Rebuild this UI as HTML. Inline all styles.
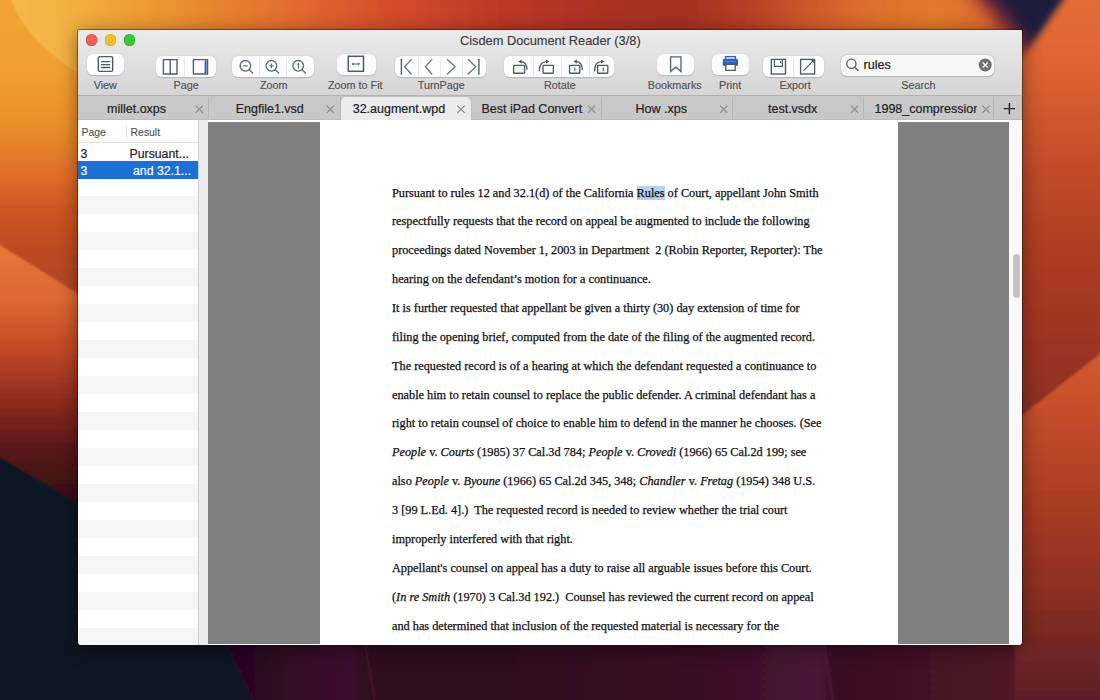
<!DOCTYPE html><html><head><meta charset="utf-8"><style>
*{margin:0;padding:0;box-sizing:border-box}
html,body{width:1100px;height:700px;overflow:hidden;background:#0b1522;font-family:"Liberation Sans",sans-serif}
.a{position:absolute}
#bg{position:absolute;left:0;top:0}
#win{position:absolute;left:78px;top:30px;width:944px;height:615px;border-radius:2px 2px 4px 4px;overflow:hidden;background:#fff;box-shadow:0 0 0 1px rgba(40,10,10,0.45),0 3px 20px rgba(0,0,0,0.45)}
#wc{position:absolute;left:-78px;top:-30px;width:1100px;height:700px}
.btn{position:absolute;background:#fcfcfc;border-radius:6px;box-shadow:0 0.5px 1.2px rgba(0,0,0,0.18)}
.lbl{position:absolute;font-size:10.8px;color:#505050;-webkit-text-stroke:0.15px #505050;white-space:nowrap;line-height:12px}
.tabt{position:absolute;font-size:12.5px;color:#222;-webkit-text-stroke:0.2px #222;white-space:nowrap;line-height:14px}
.ln{position:absolute;left:392px;font-family:"Liberation Serif",serif;font-size:12.27px;color:#111;-webkit-text-stroke:0.25px #111;white-space:nowrap;line-height:16px}
svg{position:absolute;overflow:visible}
</style></head><body><svg id="bg" width="1100" height="700" viewBox="0 0 1100 700"><defs><filter id="bl" x="-5%" y="-5%" width="110%" height="110%"><feGaussianBlur stdDeviation="1.2"/></filter><filter id="bl3" x="-20%" y="-20%" width="140%" height="140%"><feGaussianBlur stdDeviation="3"/></filter><linearGradient id="gTop" gradientUnits="userSpaceOnUse" x1="0" y1="0" x2="1100" y2="0"><stop offset="0" stop-color="#f2a935"/><stop offset="0.02" stop-color="#f4b446"/><stop offset="0.08" stop-color="#f1ab3d"/><stop offset="0.15" stop-color="#eb9432"/><stop offset="0.22" stop-color="#e57c2c"/><stop offset="0.28" stop-color="#e16630"/><stop offset="0.36" stop-color="#d44b2b"/><stop offset="0.45" stop-color="#bd3a28"/><stop offset="0.55" stop-color="#aa3024"/><stop offset="0.62" stop-color="#a43022"/><stop offset="0.68" stop-color="#b63f26"/><stop offset="0.73" stop-color="#cb582c"/><stop offset="0.78" stop-color="#db6b2e"/><stop offset="0.85" stop-color="#e07a2a"/><stop offset="0.9" stop-color="#dc6c30"/><stop offset="1" stop-color="#e06535"/></linearGradient><linearGradient id="gLeft" gradientUnits="userSpaceOnUse" x1="0" y1="0" x2="0" y2="700"><stop offset="0" stop-color="#f0a332"/><stop offset="0.1" stop-color="#f0a030"/><stop offset="0.18" stop-color="#ea8e2c"/><stop offset="0.25" stop-color="#df6e28"/><stop offset="0.3" stop-color="#cc5724"/><stop offset="0.36" stop-color="#bc4a22"/><stop offset="0.42" stop-color="#b04420"/><stop offset="1" stop-color="#a03a20"/></linearGradient><linearGradient id="gLeft2" gradientUnits="userSpaceOnUse" x1="0" y1="245" x2="0" y2="520"><stop offset="0" stop-color="#e57639"/><stop offset="0.2" stop-color="#dc6834"/><stop offset="0.38" stop-color="#c24a26"/><stop offset="0.55" stop-color="#932e20"/><stop offset="0.75" stop-color="#57161a"/><stop offset="1" stop-color="#2a0d18"/></linearGradient><linearGradient id="gYel" gradientUnits="userSpaceOnUse" x1="12" y1="0" x2="90" y2="0"><stop offset="0" stop-color="#f5b84a"/><stop offset="0.6" stop-color="#f3b244"/><stop offset="1" stop-color="#f1ab3d"/></linearGradient><linearGradient id="gRight" gradientUnits="userSpaceOnUse" x1="0" y1="0" x2="0" y2="420"><stop offset="0" stop-color="#e26c36"/><stop offset="0.15" stop-color="#df6432"/><stop offset="0.4" stop-color="#c24c28"/><stop offset="0.55" stop-color="#b24024"/><stop offset="0.7" stop-color="#a63822"/><stop offset="0.85" stop-color="#9a3220"/><stop offset="1" stop-color="#8e2e20"/></linearGradient><linearGradient id="gRight2" gradientUnits="userSpaceOnUse" x1="0" y1="350" x2="0" y2="700"><stop offset="0" stop-color="#d45c30"/><stop offset="0.2" stop-color="#c24c2a"/><stop offset="0.5" stop-color="#a33822"/><stop offset="0.72" stop-color="#872e22"/><stop offset="0.9" stop-color="#6a2426"/><stop offset="1" stop-color="#5c1e2a"/></linearGradient><linearGradient id="gBot" gradientUnits="userSpaceOnUse" x1="220" y1="0" x2="1100" y2="0"><stop offset="0" stop-color="#2a0620"/><stop offset="0.05" stop-color="#2c0722"/><stop offset="0.15" stop-color="#3e102e"/><stop offset="0.17" stop-color="#2e0a1a"/><stop offset="0.3" stop-color="#2e0a1c"/><stop offset="0.55" stop-color="#3a0d26"/><stop offset="0.68" stop-color="#4a1636"/><stop offset="0.7" stop-color="#3a0c24"/><stop offset="0.85" stop-color="#4a1428"/><stop offset="0.95" stop-color="#5a1c28"/><stop offset="1" stop-color="#622024"/></linearGradient><linearGradient id="gWedge" gradientUnits="userSpaceOnUse" x1="966.6" y1="12.8" x2="998.94" y2="-14.08"><stop offset="0" stop-color="#d06430" stop-opacity="0"/><stop offset="0.3" stop-color="#b04a32" stop-opacity="0.6"/><stop offset="0.55" stop-color="#7a2e38"/><stop offset="0.8" stop-color="#33203e"/><stop offset="1" stop-color="#1d1c3a"/></linearGradient></defs><g filter="url(#bl)"><rect x="-10" y="-10" width="1120" height="720" fill="#0b1522"/><rect x="-10" y="-10" width="1120" height="45" fill="url(#gTop)"/><rect x="-10" y="-10" width="95" height="720" fill="url(#gLeft)"/><path d="M12,-10 L12,0 C22,28 46,52 90,80 L90,-10 Z" fill="url(#gYel)"/><path d="M11,-10 L12,0 C22,28 46,52 90,80" stroke="#f7c158" stroke-width="1.3" fill="none" opacity="0.7"/><path d="M-10,239 L85,298 L85,720 L-10,720 Z" fill="url(#gLeft2)"/><path d="M-10,452 C20,468 60,492 90,512 L225,645 L256,710 L-10,710 Z" fill="#0b1522"/><path d="M225,640 L1110,640 L1110,710 L256,710 Z" fill="url(#gBot)"/><path d="M364.5,640 L376.5,710" stroke="#4e1a38" stroke-width="1.5" fill="none"/><path d="M823.5,640 L834.5,710" stroke="#561c3e" stroke-width="1.5" fill="none"/><rect x="1015" y="-10" width="95" height="720" fill="url(#gRight)"/><path d="M1015,421 L1110,346 L1110,710 L1015,710 Z" fill="url(#gRight2)"/></g><path d="M935,-15 L1073,-15 L1020,62 L1000,55 Z" fill="url(#gWedge)" filter="url(#bl3)"/></svg><div id="win"><div id="wc"><div class="a" style="left:78px;top:30px;width:944px;height:66px;background:linear-gradient(#ebebeb,#d5d5d5)"></div><div class="a" style="left:78px;top:95px;width:944px;height:1px;background:#b3b3b3"></div><div class="a" style="left:85.9px;top:34.4px;width:11.2px;height:11.2px;border-radius:50%;background:#f25f58;box-shadow:inset 0 0 0 0.5px #dc4a43"></div><div class="a" style="left:104.9px;top:34.4px;width:11.2px;height:11.2px;border-radius:50%;background:#f8bc2f;box-shadow:inset 0 0 0 0.5px #dfa127"></div><div class="a" style="left:123.9px;top:34.4px;width:11.2px;height:11.2px;border-radius:50%;background:#3bc43e;box-shadow:inset 0 0 0 0.5px #2ea832"></div><div class="a" style="left:460px;top:34px;font-size:12.8px;color:#3a3a3a;line-height:14px;white-space:nowrap;-webkit-text-stroke:0.15px #3a3a3a">Cisdem Document Reader (3/8)</div><div class="btn" style="left:87px;top:54px;width:37px;height:20.5px"></div><div class="btn" style="left:336.5px;top:54px;width:39.0px;height:20.5px"></div><div class="btn" style="left:656.5px;top:54px;width:37.5px;height:20.5px"></div><div class="btn" style="left:712px;top:54px;width:36.5px;height:20.5px"></div><div class="btn" style="left:156px;top:56.3px;width:59.5px;height:20.7px"></div><div class="a" style="left:184px;top:56.5px;width:1px;height:20.5px;background:#e8e8e8"></div><div class="btn" style="left:232px;top:56.3px;width:82px;height:20.7px"></div><div class="a" style="left:258.8px;top:56.5px;width:1px;height:20.5px;background:#e8e8e8"></div><div class="a" style="left:285.5px;top:56.5px;width:1px;height:20.5px;background:#e8e8e8"></div><div class="btn" style="left:395.2px;top:56.3px;width:91.0px;height:20.7px"></div><div class="a" style="left:417.8px;top:56.5px;width:1px;height:20.5px;background:#e8e8e8"></div><div class="a" style="left:439.7px;top:56.5px;width:1px;height:20.5px;background:#e8e8e8"></div><div class="a" style="left:462.2px;top:56.5px;width:1px;height:20.5px;background:#e8e8e8"></div><div class="btn" style="left:504px;top:56.3px;width:110px;height:20.7px"></div><div class="a" style="left:532.5px;top:56.5px;width:1px;height:20.5px;background:#e8e8e8"></div><div class="a" style="left:561px;top:56.5px;width:1px;height:20.5px;background:#e8e8e8"></div><div class="a" style="left:589px;top:56.5px;width:1px;height:20.5px;background:#e8e8e8"></div><div class="btn" style="left:762.8px;top:56.3px;width:61.0px;height:20.7px"></div><div class="a" style="left:792.5px;top:56.5px;width:1px;height:20.5px;background:#e8e8e8"></div><div class="a" style="left:840.6px;top:55px;width:153px;height:20.5px;border-radius:6px;background:#f7f7f7;box-shadow:0 0 0 0.5px rgba(0,0,0,0.12),0 0.5px 1px rgba(0,0,0,0.15)"></div><div class="lbl" style="left:93.7px;top:79px;">View</div><div class="lbl" style="left:173.5px;top:79px;">Page</div><div class="lbl" style="left:260px;top:79px;">Zoom</div><div class="lbl" style="left:328px;top:79px;">Zoom to Fit</div><div class="lbl" style="left:417.7px;top:79px;">TurnPage</div><div class="lbl" style="left:544px;top:79px;">Rotate</div><div class="lbl" style="left:647.7px;top:79px;">Bookmarks</div><div class="lbl" style="left:719px;top:79px;">Print</div><div class="lbl" style="left:779.5px;top:79px;">Export</div><div class="lbl" style="left:901.2px;top:79px;">Search</div><div class="a" style="left:863.5px;top:58px;font-size:12.6px;color:#222;line-height:14px;-webkit-text-stroke:0.2px #222">rules</div><svg class="a" style="left:0px;top:0px" width="1100" height="100" viewBox="0 0 1100 100" >
      <rect x="98.3" y="56.6" width="14.4" height="14.8" rx="1.6" stroke="#4d5a69" stroke-width="1.35" fill="none" stroke-linecap="round" stroke-linejoin="round"/>
      <path d="M101.5 61.6H109.6M101.5 64.6H109.6M101.5 67.5H109.6" stroke="#4d5a69" stroke-width="1.35" fill="none" stroke-linecap="round" stroke-linejoin="round"/>
      <rect x="163.4" y="59.6" width="13.6" height="14.4" stroke="#4d5a69" stroke-width="1.35" fill="none" stroke-linecap="round" stroke-linejoin="round"/>
      <path d="M170.2 59.6V74" stroke="#4d5a69" stroke-width="1.35" fill="none" stroke-linecap="round" stroke-linejoin="round"/>
      <rect x="193.4" y="59.6" width="14.2" height="14.4" stroke="#4d5a69" stroke-width="1.35" fill="none" stroke-linecap="round" stroke-linejoin="round"/>
      <path d="M205.6 60.5V73" stroke="#2f5fb8" stroke-width="2" fill="none"/>
      <g stroke="#5f6e7b" stroke-width="1.35" fill="none" stroke-linecap="round" stroke-linejoin="round">
        <circle cx="245.4" cy="65.8" r="5.3"/><path d="M249.3 69.7L252.6 73"/><path d="M243.6 65.8H247.2" stroke-width="1.2"/>
        <circle cx="271.4" cy="65.8" r="5.3"/><path d="M275.3 69.7L278.6 73"/><path d="M269.5 65.8H273.3M271.4 63.9V67.7" stroke-width="1.2"/>
        <circle cx="298.2" cy="65.8" r="5.3"/><path d="M302.1 69.7L305.4 73"/><path d="M297.4 64.2L298.5 63.5V68.2" stroke-width="1.2"/>
      </g>
      <rect x="348.3" y="56.3" width="15.2" height="15" stroke="#4d5a69" stroke-width="1.5" fill="none"/>
      <path d="M352.3 64H359.5M353.6 62.7L352.3 64L353.6 65.3M358.2 62.7L359.5 64L358.2 65.3" stroke="#4d5a69" stroke-width="1" fill="none"/>
      <g stroke="#4d5a69" stroke-width="1.35" fill="none" stroke-linecap="round" stroke-linejoin="round">
        <path d="M401.4 59.3V74.2"/><path d="M411.2 59.6L404.6 66.8L411.2 74" stroke="#6b7a86"/>
        <path d="M431.7 59.6L425.4 66.8L431.7 74" stroke="#6b7a86"/>
        <path d="M447.4 59.6L455.2 66.8L447.4 74" stroke="#6b7a86"/>
        <path d="M468.2 59.6L475.8 66.8L468.2 74" stroke="#6b7a86"/><path d="M478.9 59.3V74.2"/>
      </g>
      <g stroke="#4d5a69" stroke-width="1.35" fill="none">
        <rect x="513.6" y="65.4" width="11" height="7.8" rx="0.6"/>
        <path d="M520.6 61.6C524.4 61.6 527 63.8 527 69.8"/>
        <rect x="543" y="65.4" width="10.4" height="7.8" rx="0.6"/>
        <path d="M539.3 71.2C539.3 64.6 542 61.6 546.6 61.6"/>
        <rect x="569.6" y="65.4" width="10.2" height="7.8" rx="0.6"/>
        <path d="M575.8 61.6C579.6 61.6 582.3 63.8 582.3 70"/>
        <path d="M574.8 67.4V71.2" stroke-width="1.1"/>
        <rect x="597.6" y="65.4" width="10.2" height="7.8" rx="0.6"/>
        <path d="M594.5 71.3C594.5 64.6 597.2 61.6 601.6 61.6"/>
        <path d="M603.3 67.4V71.2" stroke-width="1.1"/>
      </g>
      <g fill="#4d5a69">
        <path d="M518.2 61.6L521.6 59.6V63.6Z"/>
        <path d="M549.4 61.6L546 59.6V63.6Z"/>
        <path d="M573.4 61.6L576.8 59.6V63.6Z"/>
        <path d="M604.4 61.6L601 59.6V63.6Z"/>
      </g>
      <path d="M670.6 56.8H681V71.6L675.8 67.2L670.6 71.6Z" stroke="#56646f" stroke-width="1.35" fill="none" stroke-linejoin="miter"/>
      <rect x="725.6" y="56.6" width="9.8" height="3.4" stroke="#2f5fb8" stroke-width="1.3" fill="#e8eef8"/>
      <rect x="722.8" y="58.8" width="15.2" height="7.2" rx="1.6" fill="#2f5fb8"/>
      <path d="M724.6 61.4H736.2" stroke="#6d93d6" stroke-width="0.8"/>
      <path d="M725.8 64.2V70.4H735.2V64.2Z" stroke="#4d5a69" stroke-width="1.35" fill="#fff"/>
      <rect x="771.3" y="59.4" width="14.2" height="14.6" stroke="#4d5a69" stroke-width="1.35" fill="none"/>
      <path d="M774.4 59.4V66.4H782.4V59.4M780.6 61V63.4" stroke="#4d5a69" stroke-width="1.15" fill="none"/>
      <rect x="800.6" y="59.4" width="14" height="14.6" stroke="#4d5a69" stroke-width="1.35" fill="none"/>
      <path d="M803.6 70.6L813.8 60.2" stroke="#4d5a69" stroke-width="1.15" fill="none"/>
      <path d="M810.4 59.6H814.4V63.6Z" fill="#4d5a69"/>
      <circle cx="851.4" cy="63.8" r="4.6" stroke="#5d5d5d" stroke-width="1.3" fill="none"/>
      <path d="M854.8 67.2L858 70.4" stroke="#5d5d5d" stroke-width="1.4" stroke-linecap="round"/>
      <circle cx="985.2" cy="65" r="6.5" fill="#707070"/>
      <path d="M982.7 62.5L987.7 67.5M987.7 62.5L982.7 67.5" stroke="#f4f4f4" stroke-width="1.4"/>
    </svg><div class="a" style="left:78px;top:96px;width:944px;height:24px;background:#c8c8c8"></div><div class="a" style="left:78px;top:119px;width:944px;height:1px;background:#bcbcbc"></div><div class="a" style="left:341px;top:97px;width:129.5px;height:23px;background:#ececec;border-radius:5px 5px 0 0;box-shadow:0 0 0 0.5px #b5b5b5"></div><div class="a" style="left:207.5px;top:97px;width:1px;height:22px;background:#b6b6b6"></div><div class="a" style="left:339.5px;top:97px;width:1px;height:22px;background:#b6b6b6"></div><div class="a" style="left:600.5px;top:97px;width:1px;height:22px;background:#b6b6b6"></div><div class="a" style="left:731.5px;top:97px;width:1px;height:22px;background:#b6b6b6"></div><div class="a" style="left:862.5px;top:97px;width:1px;height:22px;background:#b6b6b6"></div><div class="a" style="left:993px;top:97px;width:1px;height:22px;background:#b6b6b6"></div><div class="tabt" style="left:107px;top:101.5px;">millet.oxps</div><div class="tabt" style="left:235.7px;top:101.5px;">Engfile1.vsd</div><div class="tabt" style="left:352.7px;top:101.5px;">32.augment.wpd</div><div class="tabt" style="left:481.4px;top:101.5px;">Best iPad Convert</div><div class="tabt" style="left:635.6px;top:101.5px;">How .xps</div><div class="tabt" style="left:768px;top:101.5px;">test.vsdx</div><div class="a" style="left:874.5px;top:101.5px;width:102px;overflow:hidden"><div class="tabt" style="position:relative">1998_compression.pdf</div></div><svg class="a" style="left:0px;top:0px" width="1100" height="130" viewBox="0 0 1100 130" ><g stroke="#888" stroke-width="1.15" fill="none"><path d="M195.70000000000002 105.7L202.9 112.89999999999999M202.9 105.7L195.70000000000002 112.89999999999999"/><path d="M326.7 105.7L333.90000000000003 112.89999999999999M333.90000000000003 105.7L326.7 112.89999999999999"/><path d="M457.4 105.7L464.6 112.89999999999999M464.6 105.7L457.4 112.89999999999999"/><path d="M588.0 105.7L595.2 112.89999999999999M595.2 105.7L588.0 112.89999999999999"/><path d="M720.1 105.7L727.3000000000001 112.89999999999999M727.3000000000001 105.7L720.1 112.89999999999999"/><path d="M851.0 105.7L858.2 112.89999999999999M858.2 105.7L851.0 112.89999999999999"/><path d="M982.4 105.7L989.6 112.89999999999999M989.6 105.7L982.4 112.89999999999999"/></g><path d="M1009.4 102.9V114.3M1003.7 108.6H1015.1" stroke="#262626" stroke-width="1.45" fill="none"/></svg><div class="a" style="left:78px;top:120px;width:120px;height:525px;background:#fff"></div><div class="a" style="left:78px;top:160px;width:120px;height:18px;background:#f5f5f5"></div><div class="a" style="left:78px;top:196px;width:120px;height:18px;background:#f5f5f5"></div><div class="a" style="left:78px;top:232px;width:120px;height:18px;background:#f5f5f5"></div><div class="a" style="left:78px;top:268px;width:120px;height:18px;background:#f5f5f5"></div><div class="a" style="left:78px;top:304px;width:120px;height:18px;background:#f5f5f5"></div><div class="a" style="left:78px;top:340px;width:120px;height:18px;background:#f5f5f5"></div><div class="a" style="left:78px;top:376px;width:120px;height:18px;background:#f5f5f5"></div><div class="a" style="left:78px;top:412px;width:120px;height:18px;background:#f5f5f5"></div><div class="a" style="left:78px;top:448px;width:120px;height:18px;background:#f5f5f5"></div><div class="a" style="left:78px;top:484px;width:120px;height:18px;background:#f5f5f5"></div><div class="a" style="left:78px;top:520px;width:120px;height:18px;background:#f5f5f5"></div><div class="a" style="left:78px;top:556px;width:120px;height:18px;background:#f5f5f5"></div><div class="a" style="left:78px;top:592px;width:120px;height:18px;background:#f5f5f5"></div><div class="a" style="left:78px;top:628px;width:120px;height:18px;background:#f5f5f5"></div><div class="a" style="left:78px;top:141.5px;width:120px;height:1px;background:#e0e0e0"></div><div class="a" style="left:126px;top:125px;width:1px;height:13px;background:#e3e3e3"></div><div class="a" style="left:81.6px;top:126.5px;font-size:10.4px;color:#505050;line-height:12px;-webkit-text-stroke:0.1px #505050">Page</div><div class="a" style="left:130.6px;top:126.5px;font-size:10.4px;color:#505050;line-height:12px;-webkit-text-stroke:0.1px #505050">Result</div><div class="a" style="left:78px;top:161px;width:120px;height:17.5px;background:#1b6fd6"></div><div class="a" style="left:80.5px;top:146.5px;font-size:12.3px;color:#1e1e1e;line-height:14px;-webkit-text-stroke:0.2px #1e1e1e">3</div><div class="a" style="left:129.5px;top:146.5px;font-size:12.3px;color:#1e1e1e;line-height:14px;-webkit-text-stroke:0.2px #1e1e1e">Pursuant...</div><div class="a" style="left:80.5px;top:163.5px;font-size:12.3px;color:#fff;line-height:14px;-webkit-text-stroke:0.15px #fff">3</div><div class="a" style="left:133px;top:163.5px;font-size:12.3px;color:#fff;line-height:14px;-webkit-text-stroke:0.15px #fff">and 32.1...</div><div class="a" style="left:198px;top:120px;width:10px;height:525px;background:#ececec"></div><div class="a" style="left:198px;top:120px;width:1px;height:525px;background:#cfcfcf"></div><div class="a" style="left:208px;top:120px;width:814px;height:2px;background:#fff"></div><div class="a" style="left:208px;top:122px;width:801px;height:522px;background:#808080"></div><div class="a" style="left:320px;top:122px;width:577.5px;height:522px;background:#fff"></div><div class="a" style="left:1009px;top:120px;width:13px;height:525px;background:#fafafa"></div><div class="a" style="left:1012.6px;top:254px;width:7.4px;height:43.5px;border-radius:4px;background:#c4c4c4"></div><div class="ln" style="left:392px;top:184.5px;">Pursuant to rules 12 and 32.1(d) of the California <span style="background:#b5d2f0">Rules</span> of Court, appellant John Smith</div><div class="ln" style="left:392px;top:213.37px;">respectfully requests that the record on appeal be augmented to include the following</div><div class="ln" style="left:392px;top:242.24px;">proceedings dated November 1, 2003 in Department&nbsp; 2 (Robin Reporter, Reporter): The</div><div class="ln" style="left:392px;top:271.11px;">hearing on the defendant’s motion for a continuance.</div><div class="ln" style="left:392px;top:299.98px;">It is further requested that appellant be given a thirty (30) day extension of time for</div><div class="ln" style="left:392px;top:328.85px;">filing the opening brief, computed from the date of the filing of the augmented record.</div><div class="ln" style="left:392px;top:357.72px;">The requested record is of a hearing at which the defendant requested a continuance to</div><div class="ln" style="left:392px;top:386.59px;">enable him to retain counsel to replace the public defender. A criminal defendant has a</div><div class="ln" style="left:392px;top:415.46px;">right to retain counsel of choice to enable him to defend in the manner he chooses. (See</div><div class="ln" style="left:392px;top:444.33px;"><i>People</i> v. <i>Courts</i> (1985) 37 Cal.3d 784; <i>People</i> v. <i>Crovedi</i> (1966) 65 Cal.2d 199; see</div><div class="ln" style="left:392px;top:473.2px;">also <i>People</i> v. <i>Byoune</i> (1966) 65 Cal.2d 345, 348; <i>Chandler</i> v. <i>Fretag</i> (1954) 348 U.S.</div><div class="ln" style="left:392px;top:502.07px;">3 [99 L.Ed. 4].)&nbsp; The requested record is needed to review whether the trial court</div><div class="ln" style="left:392px;top:530.94px;">improperly interfered with that right.</div><div class="ln" style="left:392px;top:559.81px;">Appellant's counsel on appeal has a duty to raise all arguable issues before this Court.</div><div class="ln" style="left:392px;top:588.68px;">(<i>In re Smith</i> (1970) 3 Cal.3d 192.)&nbsp; Counsel has reviewed the current record on appeal</div><div class="ln" style="left:392px;top:617.55px;">and has determined that inclusion of the requested material is necessary for the</div></div></div></body></html>
